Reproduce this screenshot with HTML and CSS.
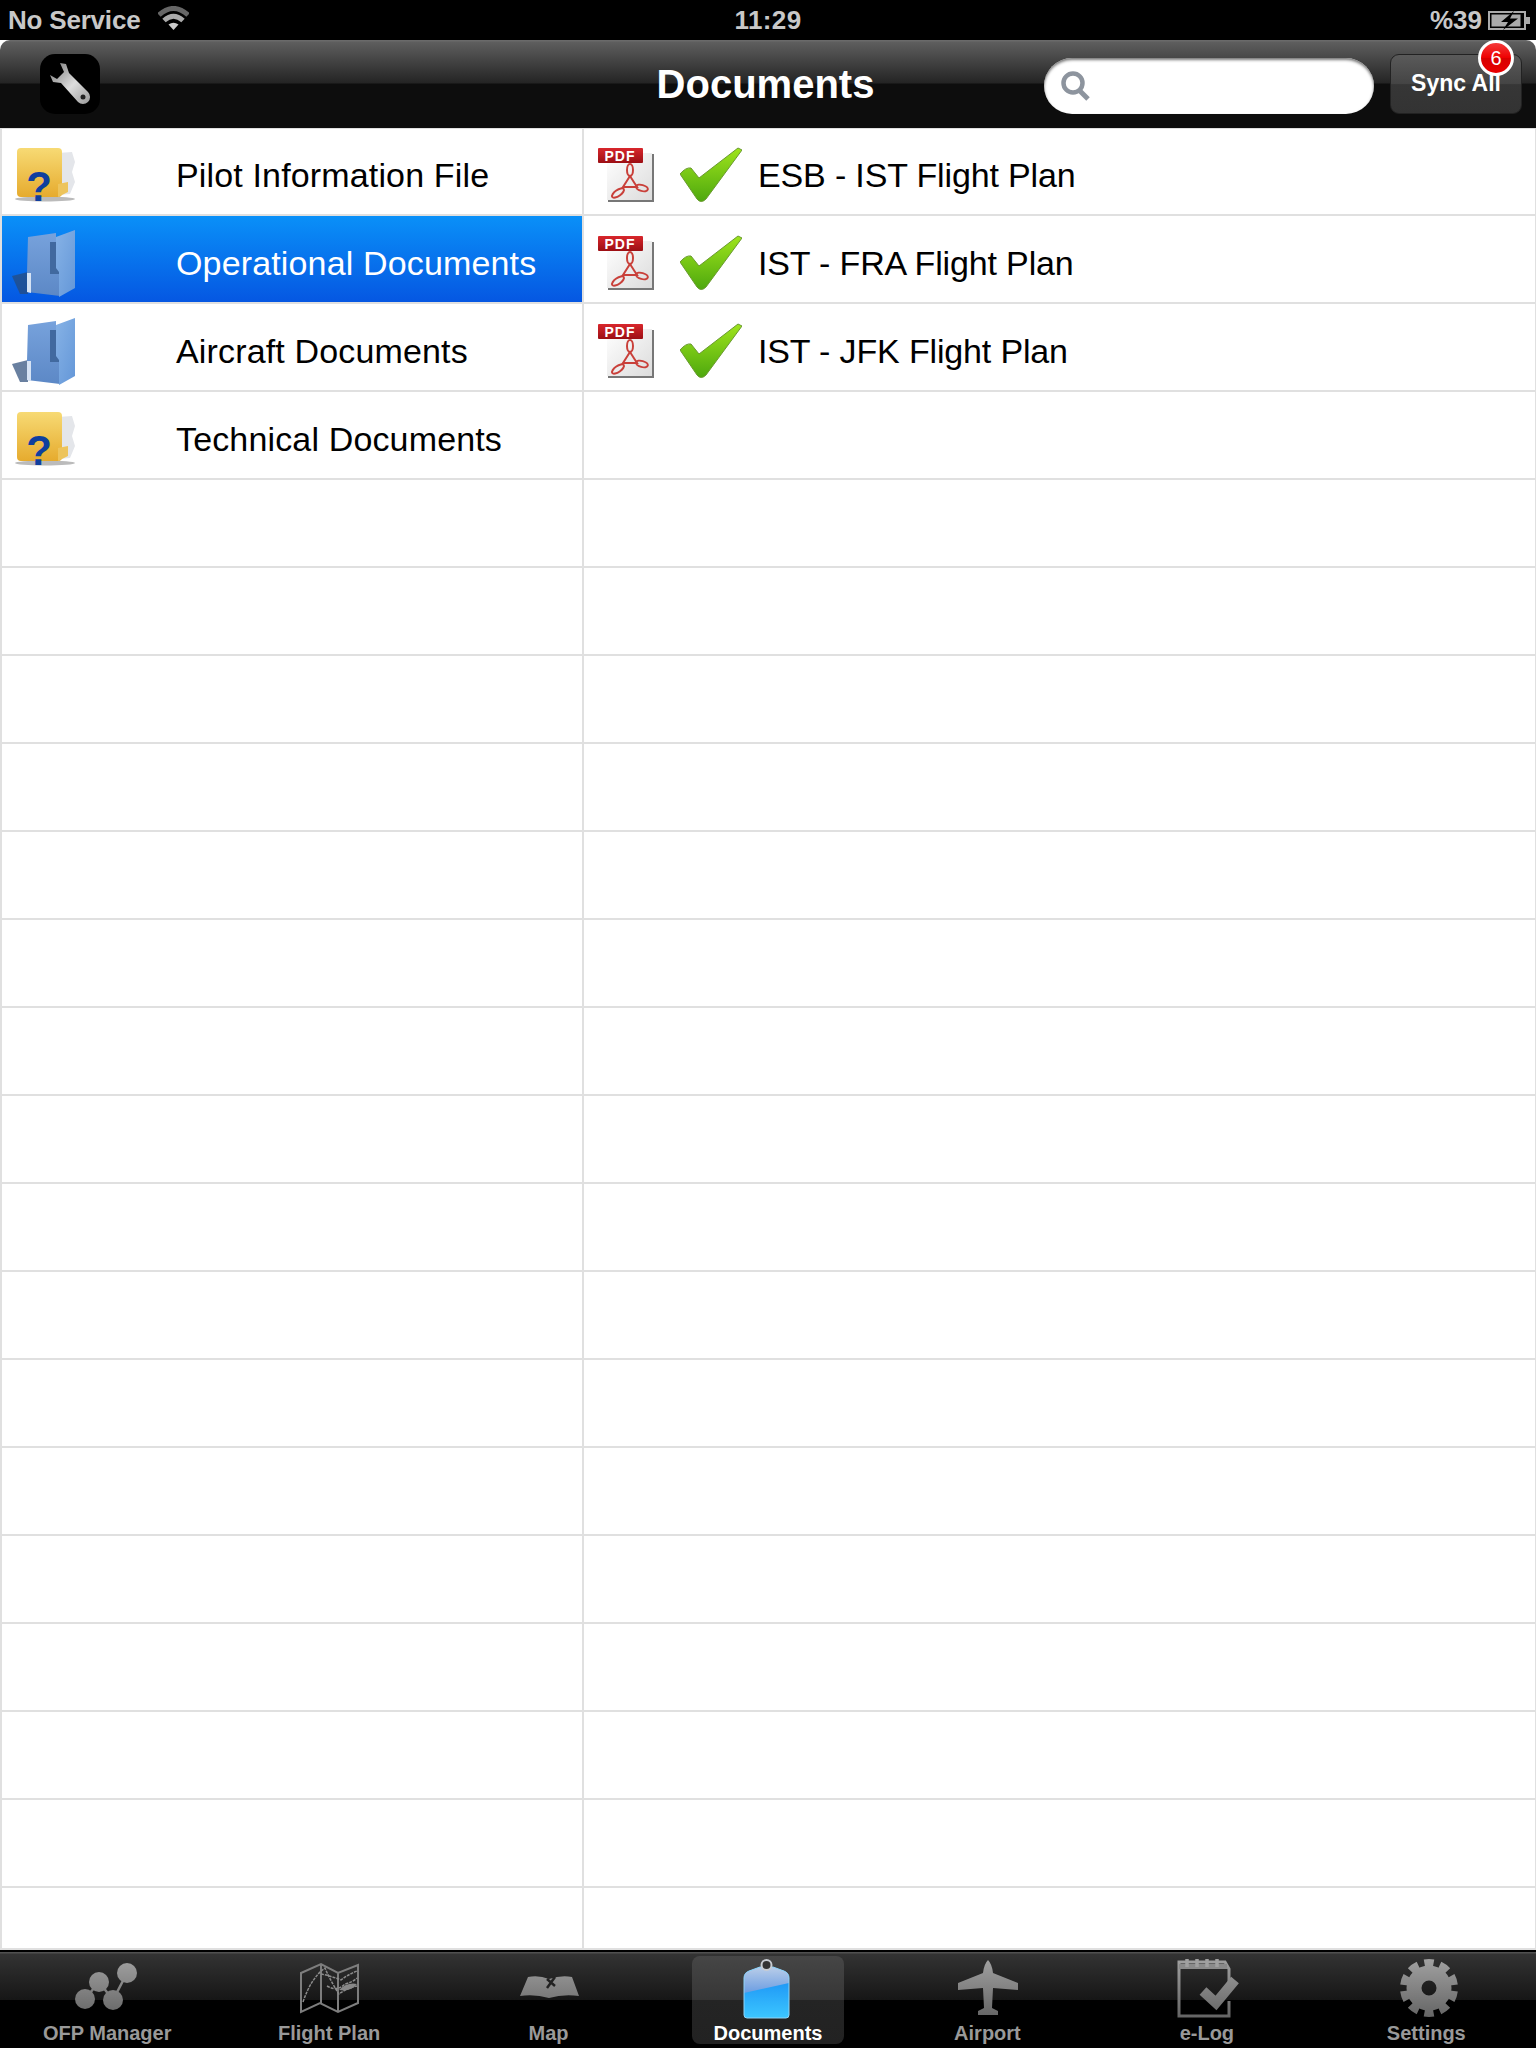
FILE: index.html
```html
<!DOCTYPE html>
<html>
	<head>
		<meta charset="utf-8">
		<meta name="viewport" content="width=device-width, initial-scale=1">
		<title>Documents</title>
		<link rel="stylesheet" href="styles.css">
	</head>
	<body>
		<!-- shared icon parts -->
		<svg class="defs">
			<defs>
				<linearGradient id="tabGrey" gradientUnits="userSpaceOnUse" x1="0" y1="0" x2="0" y2="64">
					<stop offset="0" stop-color="#a4a4a4"/>
					<stop offset="1" stop-color="#626262"/>
				</linearGradient>
				<linearGradient id="wrenchGrey" x1="0" y1="0" x2="1" y2="1">
					<stop offset="0" stop-color="#777"/>
					<stop offset="0.55" stop-color="#ddd"/>
					<stop offset="1" stop-color="#999"/>
				</linearGradient>
				<linearGradient id="folderYellow" x1="0" y1="0" x2="0" y2="1">
					<stop offset="0" stop-color="#f7da74"/>
					<stop offset="1" stop-color="#e6ab2e"/>
				</linearGradient>
				<linearGradient id="folderBlue" x1="0" y1="0" x2="1" y2="1">
					<stop offset="0" stop-color="#86b2e6"/>
					<stop offset="1" stop-color="#6497d8"/>
				</linearGradient>
				<linearGradient id="folderBack" x1="0" y1="0" x2="0" y2="1">
					<stop offset="0" stop-color="#77a2dc"/>
					<stop offset="1" stop-color="#5c88c6"/>
				</linearGradient>
				<linearGradient id="pdfPage" x1="0" y1="0" x2="1" y2="1">
					<stop offset="0" stop-color="#fff"/>
					<stop offset="1" stop-color="#dcdcdc"/>
				</linearGradient>
				<linearGradient id="pdfRed" x1="0" y1="0" x2="0" y2="1">
					<stop offset="0" stop-color="#d8262c"/>
					<stop offset="1" stop-color="#9c0f14"/>
				</linearGradient>
				<linearGradient id="checkGreen" x1="0" y1="0" x2="0" y2="1">
					<stop offset="0" stop-color="#9ee41c"/>
					<stop offset="1" stop-color="#4ea80e"/>
				</linearGradient>
				<linearGradient id="clipTop" x1="0" y1="0" x2="0" y2="1">
					<stop offset="0" stop-color="#bccfe9"/>
					<stop offset="1" stop-color="#6b9de2"/>
				</linearGradient>
				<linearGradient id="clipBottom" x1="0" y1="0" x2="0" y2="1">
					<stop offset="0" stop-color="#1284f2"/>
					<stop offset="1" stop-color="#3cc6ff"/>
				</linearGradient>
				<clipPath id="clipShape">
					<path d="M8 22Q8 17 13 15L24 11H37L48 15Q53 17 53 22V59Q53 62 50 62H11Q8 62 8 59Z"/>
				</clipPath>
				<g id="yellowFolder">
					<ellipse cx="33" cy="71" rx="30" ry="2.500" fill="#bbb"/>
					<path d="M46 25L60 24L63 34L60 44L63 54L58 66L46 67Z" fill="#e4e6ea"/>
					<path d="M5 24Q5 20 9 20H46Q50 20 50 24V65Q50 69 46 69H9Q5 69 5 65Z" fill="url(#folderYellow)"/>
					<path d="M46 56L56 54V64L46 69Z" fill="#edc45c"/>
					<text x="27" y="73" class="folder-mark">?</text>
				</g>
				<g id="blueFolder">
					<path d="M0 60L16 56V78L8 78Z" fill="#2a4a78" opacity="0.7"/>
					<path d="M16 21L44 17V56L48 58V80L15 76V57Z" fill="url(#folderBack)"/>
					<rect x="38" y="26" width="9" height="32" fill="#41699f"/>
					<path d="M15 57H19V77L15 76Z" fill="#d6e3f4"/>
					<path d="M44 21L63 14V72L47 81V56L44 52Z" fill="url(#folderBlue)"/>
				</g>
				<g id="pdfIcon">
					<rect x="10" y="26" width="46" height="48" fill="#777"/>
					<rect x="9" y="25" width="45" height="47" fill="url(#pdfPage)"/>
					<rect x="0" y="20" width="45" height="15" rx="1" fill="url(#pdfRed)"/>
					<text x="22" y="32.500" class="pdf-mark">PDF</text>
					<g fill="none" stroke="#c9403a" stroke-width="2">
						<ellipse cx="32" cy="42" rx="3" ry="6"/>
						<path d="M32 48L25 59H39Z"/>
						<ellipse cx="20" cy="65" rx="7" ry="3" transform="rotate(-35 20 65)"/>
						<ellipse cx="44" cy="60" rx="6" ry="3" transform="rotate(15 44 60)"/>
					</g>
				</g>
				<path id="checkIcon" d="M0 46Q6 39 11 40L19 50L58 20L62 22L26 71Q21 76 17 71Z" fill="url(#checkGreen)" stroke="#6a9a30" stroke-width="1"/>
			</defs>
		</svg>

		<div class="status-bar">
			<div class="status-left">
				<span>No Service</span>
				<svg class="wifi" viewBox="0 0 31 24">
					<path d="M1 9Q15.500 -4 30 9" fill="none" stroke="#666" stroke-width="5"/>
					<path d="M6 14.500Q15.500 6 25 14.500" fill="none" stroke="#aaa" stroke-width="5"/>
					<path d="M10.500 18.500Q15.500 15 20.500 18.500L15.500 24Z" fill="#ccc"/>
				</svg>
			</div>
			<div class="status-time">11:29</div>
			<div class="status-right">
				<span>%39</span>
				<svg class="battery" viewBox="0 0 42 19">
					<rect x="1" y="1" width="36" height="17" fill="none" stroke="#aaa" stroke-width="2"/>
					<rect x="38" y="6" width="4" height="7" fill="#aaa"/>
					<rect x="3.500" y="3.500" width="29" height="12" fill="#aaa"/>
					<path d="M26 0L13 11H20L15 19L30 7.500H22Z" fill="#000"/>
				</svg>
			</div>
		</div>

		<div class="nav-bar">
			<div class="nav-left">
				<div class="tool-button">
					<svg class="wrench" viewBox="0 0 60 60">
						<path d="M20 9L26 10L29 19L48 38A7 7 0 0 1 38 48L21 29L13 28L10 21L17 25L24 18Z" fill="url(#wrenchGrey)"/>
						<circle cx="43" cy="43" r="2.500" fill="#222"/>
					</svg>
				</div>
			</div>
			<h1 class="nav-title">Documents</h1>
			<div class="nav-right">
				<div class="search-box">
					<svg class="search-icon" viewBox="0 0 30 30">
						<circle cx="13" cy="12" r="9.500" fill="none" stroke="#8d949e" stroke-width="4.500"/>
						<path d="M19 19L28 28" stroke="#8d949e" stroke-width="5"/>
					</svg>
				</div>
				<div class="sync-button">
					Sync All
					<span class="badge">6</span>
				</div>
			</div>
		</div>

		<div class="lists">
			<div class="col col-left">
				<div class="row">
					<svg class="folder" viewBox="0 0 64 86"><use href="#yellowFolder"/></svg>
					<span class="row-label">Pilot Information File</span>
				</div>
				<div class="row row-selected">
					<svg class="folder" viewBox="0 0 64 86"><use href="#blueFolder"/></svg>
					<span class="row-label">Operational Documents</span>
				</div>
				<div class="row">
					<svg class="folder" viewBox="0 0 64 86"><use href="#blueFolder"/></svg>
					<span class="row-label">Aircraft Documents</span>
				</div>
				<div class="row">
					<svg class="folder" viewBox="0 0 64 86"><use href="#yellowFolder"/></svg>
					<span class="row-label">Technical Documents</span>
				</div>
				<div class="row"></div><div class="row"></div><div class="row"></div><div class="row"></div>
				<div class="row"></div><div class="row"></div><div class="row"></div><div class="row"></div>
				<div class="row"></div><div class="row"></div><div class="row"></div><div class="row"></div>
				<div class="row"></div><div class="row"></div><div class="row"></div><div class="row"></div>
				<div class="row"></div>
			</div>
			<div class="col col-right">
				<div class="row">
					<svg class="pdf" viewBox="0 0 58 86"><use href="#pdfIcon"/></svg>
					<svg class="check" viewBox="0 0 62 86"><use href="#checkIcon"/></svg>
					<span class="doc-label">ESB - IST Flight Plan</span>
				</div>
				<div class="row">
					<svg class="pdf" viewBox="0 0 58 86"><use href="#pdfIcon"/></svg>
					<svg class="check" viewBox="0 0 62 86"><use href="#checkIcon"/></svg>
					<span class="doc-label">IST - FRA Flight Plan</span>
				</div>
				<div class="row">
					<svg class="pdf" viewBox="0 0 58 86"><use href="#pdfIcon"/></svg>
					<svg class="check" viewBox="0 0 62 86"><use href="#checkIcon"/></svg>
					<span class="doc-label">IST - JFK Flight Plan</span>
				</div>
				<div class="row"></div>
				<div class="row"></div><div class="row"></div><div class="row"></div><div class="row"></div>
				<div class="row"></div><div class="row"></div><div class="row"></div><div class="row"></div>
				<div class="row"></div><div class="row"></div><div class="row"></div><div class="row"></div>
				<div class="row"></div><div class="row"></div><div class="row"></div><div class="row"></div>
				<div class="row"></div>
			</div>
		</div>

		<div class="tab-bar">
			<div class="tab">
				<svg class="tab-icon" viewBox="0 0 64 64">
					<path d="M10 43L24 26L38 44L52 17" fill="none" stroke="url(#tabGrey)" stroke-width="2.500"/>
					<circle cx="10" cy="43" r="10" fill="url(#tabGrey)"/>
					<circle cx="24" cy="26" r="10" fill="url(#tabGrey)"/>
					<circle cx="38" cy="44" r="10" fill="url(#tabGrey)"/>
					<circle cx="52" cy="17" r="10" fill="url(#tabGrey)"/>
				</svg>
				<span class="tab-label">OFP Manager</span>
			</div>
			<div class="tab">
				<svg class="tab-icon" viewBox="0 0 64 64">
					<path d="M4 17L24 8L41 17L61 9V47L41 56L23 47L4 56Z M24 8V47 M41 17V56" fill="none" stroke="#7d7d7d" stroke-width="2"/>
					<path d="M6 46Q14 22 28 12Q34 26 42 38Q50 32 60 30M24 18Q34 20 44 24Q52 18 60 15M30 30Q40 36 48 28Q56 26 60 22" fill="none" stroke="#8c8c8c" stroke-width="1.500" stroke-dasharray="3 1"/>
					<path d="M42 34Q50 26 60 28Q54 36 42 34Z" fill="#888"/>
				</svg>
				<span class="tab-label">Flight Plan</span>
			</div>
			<div class="tab">
				<svg class="tab-icon" viewBox="0 0 64 64">
					<path d="M11 21Q22 19 32 23Q44 19 55 21L62 40Q46 38 32 42Q18 38 3 40Z" fill="url(#tabGrey)"/>
					<path d="M30 32L38 21M30 23L38 30" stroke="#222" stroke-width="2.500"/>
				</svg>
				<span class="tab-label">Map</span>
			</div>
			<div class="tab tab-selected">
				<svg class="tab-icon" viewBox="0 0 64 64">
					<g clip-path="url(#clipShape)">
						<rect x="8" y="10" width="45" height="52" fill="url(#clipBottom)"/>
						<path d="M8 10H53V27L8 37Z" fill="url(#clipTop)"/>
					</g>
					<path d="M8 22Q8 17 13 15L24 11H37L48 15Q53 17 53 22V59Q53 62 50 62H11Q8 62 8 59Z" fill="none" stroke="#8fd4f8" stroke-width="1"/>
					<circle cx="30.500" cy="9" r="5" fill="#333" stroke="#c8ccd2" stroke-width="2"/>
				</svg>
				<span class="tab-label">Documents</span>
			</div>
			<div class="tab">
				<svg class="tab-icon" viewBox="0 0 64 64">
					<path d="M33 4Q37 8 38 17L63 27V34L38 32L37 52L43 55V59H23V55L29 52L28 32L3 34V27L28 17Q29 8 33 4Z" fill="url(#tabGrey)"/>
				</svg>
				<span class="tab-label">Airport</span>
			</div>
			<div class="tab">
				<svg class="tab-icon" viewBox="0 0 64 64">
					<path d="M54 27V13L50 6H4V60H54V45" fill="none" stroke="url(#tabGrey)" stroke-width="3"/>
					<path d="M4 8H52V13H4Z" fill="#8a8a8a"/>
					<path d="M12 3V11M22 3V11M32 3V11M42 3V11" stroke="#a0a0a0" stroke-width="3.500"/>
					<path d="M28 35L41 47L60 24" fill="none" stroke="url(#tabGrey)" stroke-width="10"/>
				</svg>
				<span class="tab-label">e-Log</span>
			</div>
			<div class="tab">
				<svg class="tab-icon" viewBox="0 0 70 64">
					<circle cx="38" cy="32" r="15" fill="none" stroke="url(#tabGrey)" stroke-width="15"/>
					<circle cx="38" cy="32" r="25" fill="none" stroke="url(#tabGrey)" stroke-width="8" pathLength="20" stroke-dasharray="1.200 0.800" stroke-dashoffset="1.600"/>
				</svg>
				<span class="tab-label">Settings</span>
			</div>
		</div>
	</body>
</html>
```

FILE: styles.css
```css
*{
	box-sizing: border-box;
}
body{
	margin: 0;
	width: 1536px;
	height: 2048px;
	overflow: hidden;
	display: flex;
	flex-direction: column;
	background: #fff;
	font-family: "Liberation Sans", Arial, sans-serif;
}
.defs{
	position: absolute;
	width: 0;
	height: 0;
}
.folder-mark{
	font-family: "Liberation Sans", Arial, sans-serif;
	font-size: 42px;
	font-weight: bold;
	text-anchor: middle;
	fill: #0f3f9e;
}
.pdf-mark{
	font-family: "Liberation Sans", Arial, sans-serif;
	font-size: 14px;
	font-weight: bold;
	letter-spacing: 1px;
	text-anchor: middle;
	fill: #fff;
}

/* status bar */
.status-bar{
	height: 40px;
	flex: none;
	display: grid;
	grid-template-columns: 1fr auto 1fr;
	align-items: center;
	padding: 0 6px 0 8px;
	background: #000;
	color: #c8c8c8;
	font-size: 26px;
	font-weight: bold;
}
.status-left{
	display: flex;
	align-items: center;
	gap: 18px;
}
.status-left span{
	letter-spacing: -0.2px;
}
.status-right{
	display: flex;
	align-items: center;
	justify-content: flex-end;
	gap: 6px;
}
.status-time{
	margin-right: 2px;
	letter-spacing: 0.4px;
}
.wifi{
	width: 31px;
	height: 24px;
	margin-top: -4px;
}
.battery{
	width: 42px;
	height: 19px;
}

/* nav bar */
.nav-bar{
	height: 88px;
	flex: none;
	display: grid;
	grid-template-columns: 1fr auto 1fr;
	align-items: center;
	padding: 0 14px 0 40px;
	background: linear-gradient(#6a6a6a, #6a6a6a 1px, #5e5e5e 2px, #242424 43px, #0d0d0d 44px, #0d0d0d);
	border-radius: 10px 10px 0 0;
}
.tool-button{
	width: 60px;
	height: 60px;
	background: #000;
	border-radius: 15px;
}
.wrench{
	display: block;
	width: 60px;
	height: 60px;
}
.nav-title{
	margin: 0 31px 0 0;
	color: #fff;
	font-size: 40px;
	font-weight: bold;
}
.nav-right{
	display: flex;
	align-items: center;
	justify-content: flex-end;
	gap: 16px;
}
.search-box{
	width: 330px;
	height: 56px;
	margin-top: 4px;
	padding-left: 16px;
	display: flex;
	align-items: center;
	background: #fff;
	border-radius: 28px;
	box-shadow: inset 0 2px 3px #777;
}
.search-icon{
	width: 30px;
	height: 30px;
}
.sync-button{
	position: relative;
	width: 132px;
	height: 60px;
	padding-bottom: 2px;
	display: flex;
	align-items: center;
	justify-content: center;
	color: #fff;
	font-size: 23px;
	font-weight: bold;
	background: linear-gradient(#5a5a5a, #444 50%, #363636 51%, #333);
	border: 1px solid #222;
	border-radius: 9px;
}
.badge{
	position: absolute;
	top: -15px;
	left: 87px;
	width: 36px;
	height: 36px;
	display: flex;
	align-items: center;
	justify-content: center;
	color: #fff;
	font-size: 20px;
	font-weight: normal;
	background: linear-gradient(#f43a3a, #ee0000 50%, #d80000 51%, #e80000);
	border: 3px solid #fff;
	border-radius: 50%;
}

/* the two lists */
.lists{
	flex: 1;
	min-height: 0;
	display: flex;
	overflow: hidden;
	border-bottom: 2px solid #e0e0e0;
}
.col{
	height: 100%;
	overflow: hidden;
}
.col-left{
	width: 584px;
	flex: none;
	border-left: 2px solid #e0e0e0;
	border-right: 2px solid #e0e0e0;
}
.col-right{
	flex: 1;
	border-right: 1px solid #e0e0e0;
}
.row{
	height: 88px;
	display: flex;
	align-items: flex-start;
	border-bottom: 2px solid #e0e0e0;
}
.row:first-child{
	box-shadow: inset 0 1px #e0e0e0;
}
.col-left .row{
	padding-left: 10px;
}
.col-right .row{
	padding-left: 14px;
}
.row-selected{
	color: #fff;
	background: linear-gradient(#0a90f8, #0557e2);
}
.folder{
	width: 64px;
	height: 86px;
	flex: none;
}
.pdf{
	width: 58px;
	height: 86px;
	flex: none;
}
.check{
	width: 62px;
	height: 86px;
	flex: none;
	margin-left: 24px;
}
.row-label, .doc-label{
	font-size: 34px;
	line-height: 38px;
	margin-top: 28px;
}
.row-label{
	margin-left: 100px;
	letter-spacing: 0.15px;
}
.doc-label{
	margin-left: 16px;
	letter-spacing: -0.15px;
}

/* tab bar */
.tab-bar{
	height: 98px;
	flex: none;
	display: flex;
	justify-content: space-between;
	padding-top: 6px;
	background: linear-gradient(#000, #000 2px, #505050 2px, #505050 3px, #333 4px, #161616 50px, #000 50px);
}
.tab{
	flex: none;
	width: 219.400px;
	height: 88px;
	display: flex;
	flex-direction: column;
	align-items: center;
}
.tab:first-child{
	padding-right: 5px;
}
.tab-icon{
	width: 64px;
	height: 64px;
	flex: none;
}
.tab:last-child .tab-icon{
	width: 70px;
}
.tab-label{
	margin-top: 4px;
	color: #999;
	font-size: 20px;
	font-weight: bold;
	line-height: 18px;
	white-space: nowrap;
}
.tab-selected{
	width: 152px;
	margin: 0 33.700px;
	background: linear-gradient(#464646, #363636 44px, #242424 44px, #222);
	border-radius: 8px;
}
.tab-selected .tab-label{
	color: #fff;
}
```
